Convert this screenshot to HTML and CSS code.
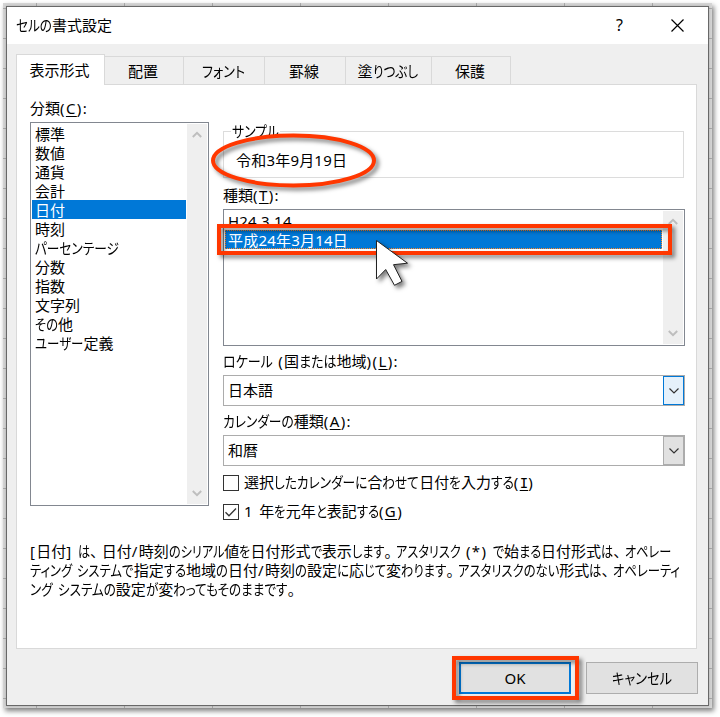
FILE: index.html
```
<!DOCTYPE html>
<html lang="ja">
<head>
<meta charset="utf-8">
<title>セルの書式設定</title>
<link rel="stylesheet" href="styles.css">
</head>
<body>
<div class="sheet">
<main class="dialog">
  <header class="titlebar">
    <h1><span data-width="96">セルの書式設定</span></h1>
    <span class="help">?</span>
    <svg class="close" width="13" height="13" viewBox="0 0 13 13"><path d="M.5.5l12 12M12.5.5l-12 12"/></svg>
  </header>
  <nav class="tabs">
    <div class="tab active">表示形式</div>
    <div class="tab w1">配置</div>
    <div class="tab w2"><span data-width="43">フォント</span></div>
    <div class="tab w2">罫線</div>
    <div class="tab w3"><span data-width="60">塗りつぶし</span></div>
    <div class="tab w4">保護</div>
  </nav>
  <section class="panel">
    <div class="columns">
      <div class="left">
        <div class="label">分類<span class="key">(<u>C</u>):</span></div>
        <div class="listbox categories">
          <ul>
            <li>標準</li><li>数値</li><li>通貨</li><li>会計</li>
            <li class="selected">日付</li>
            <li>時刻</li><li><span data-width="84">パーセンテージ</span></li><li>分数</li><li>指数</li><li>文字列</li>
            <li><span data-width="38">その他</span></li><li><span data-width="78.5">ユーザー定義</span></li>
          </ul>
          <div class="scroll">
            <svg width="10" height="7" viewBox="0 0 10 7"><path d="M.8 6L5 1.8 9.2 6"/></svg>
            <svg width="10" height="7" viewBox="0 0 10 7"><path d="M.8 1L5 5.2 9.2 1"/></svg>
          </div>
        </div>
      </div>
      <div class="right">
        <fieldset class="sample"><legend><span data-width="47">サンプル</span></legend><span class="date">令和3年9月19日</span></fieldset>
        <div class="label type-label">種類<span class="key">(<u>T</u>):</span></div>
        <div class="listbox types">
          <ul><li class="date">H24.3.14</li><li class="selected focus date">平成24年3月14日</li></ul>
          <div class="scroll">
            <svg width="10" height="7" viewBox="0 0 10 7"><path d="M.8 6L5 1.8 9.2 6"/></svg>
            <svg width="10" height="7" viewBox="0 0 10 7"><path d="M.8 1L5 5.2 9.2 1"/></svg>
          </div>
        </div>
        <div class="label field-label"><span data-width="176">ロケール<span class="key"> (</span>国または地域<span class="key">)(<u>L</u>):</span></span></div>
        <div class="combo hot"><span>日本語</span><i><svg width="10" height="6" viewBox="0 0 10 6"><path d="M.5.5L5 5 9.5.5"/></svg></i></div>
        <div class="label field-label"><span data-width="129">カレンダーの種類<span class="key">(<u>A</u>):</span></span></div>
        <div class="combo"><span>和暦</span><i><svg width="10" height="6" viewBox="0 0 10 6"><path d="M.5.5L5 5 9.5.5"/></svg></i></div>
        <div class="check first"><b></b><span data-width="290">選択したカレンダーに合わせて日付を入力する<span class="key">(<u class="serif-i">I</u>)</span></span></div>
        <div class="check"><b><svg width="14" height="14" viewBox="0 0 14 14"><path d="M1.5 7.2L5 10.7 12 3.5"/></svg></b><span data-width="159"><span class="key">1 </span>年を元年と表記する<span class="key">(<u>G</u>)</span></span></div>
      </div>
    </div>
    <p class="description">
      <span data-width="641"><span class="key">[</span>日付<span class="key">] </span>は、日付<span class="key">/</span>時刻のシリアル値を日付形式で表示します。アスタリスク<span class="key"> (*) </span>で始まる日付形式は、オペレー</span><br>
      <span data-width="650">ティング<span class="key"> </span>システムで指定する地域の日付<span class="key">/</span>時刻の設定に応じて変わります。アスタリスクのない形式は、オペレーティ</span><br>
      <span data-width="269">ング<span class="key"> </span>システムの設定が変わってもそのままです。</span>
    </p>
  </section>
  <footer class="buttons">
    <button class="ok">OK</button><button><span data-width="60">キャンセル</span></button>
  </footer>
</main>
</div>
<svg class="marks" width="720" height="717" viewBox="0 0 720 717">
  <g class="red">
    <ellipse cx="293.5" cy="160.5" rx="80.5" ry="25"/>
    <rect x="219" y="226" width="451" height="27"/>
    <rect x="454" y="658" width="123" height="40"/>
  </g>
  <path class="cursor" d="M376.5 240.5V279l9.2-9.5 8.8 15.8 7.5-3.9-8.5-16.7 14-1.5z"/>
</svg>
<script src="kana.js"></script>
</body>
</html>
```
FILE: kana.js
```
// UI fonts set kana narrower than kanji: condense the kana runs of each label to its set width.
document.querySelectorAll('[data-width]').forEach(function (label) {
  var walker = document.createTreeWalker(label, NodeFilter.SHOW_TEXT), nodes = [], node;
  while ((node = walker.nextNode())) nodes.push(node);
  nodes.forEach(function (text) {
    var part = document.createDocumentFragment();
    text.data.split(/([ぁ-ゟァ-ヿ]+|[、。])/).forEach(function (run) {
      if (!run) return;
      if (/^[ぁ-ヿ、。]/.test(run)) {
        var span = document.createElement('span');
        span.className = /[、。]/.test(run) ? 'stop' : 'kana';
        span.textContent = run;
        part.appendChild(span);
      } else part.appendChild(document.createTextNode(run));
    });
    text.replaceWith(part);
  });
  var kana = Array.from(label.querySelectorAll('.kana'));
  var widths = kana.map(function (k) { return k.getBoundingClientRect().width; });
  var total = widths.reduce(function (a, b) { return a + b; }, 0);
  var scale = 1 - (label.getBoundingClientRect().width - Number(label.dataset.width)) / total;
  kana.forEach(function (k, i) {
    k.style.transform = 'scaleX(' + scale + ')';
    k.style.marginRight = widths[i] * (scale - 1) + 'px';
  });
});
```
FILE: styles.css
```
* { box-sizing: border-box; }
body {
  margin: 0; width: 720px; height: 717px; overflow: hidden; position: relative;
  padding: 3px; background: #fff; color: #000;
  font: 15px/19px "Noto Sans", "Noto Sans CJK JP", sans-serif;
  font-feature-settings: "palt"; white-space: nowrap;
}
[data-width] { display: inline-block; }
.kana { display: inline-block; transform-origin: 0 50%; }
.stop { letter-spacing: 4px; }
.key { letter-spacing: 1.4px; white-space: pre; }
.serif-i { font-family: "DejaVu Sans Mono", monospace; font-size: 14px; letter-spacing: 0; }
.sheet {
  width: 709px; height: 705px; padding: 3px;
  background:
    repeating-linear-gradient(90deg, transparent 0 33px, #aaa 33px 34px, transparent 34px 88px),
    repeating-linear-gradient(180deg, transparent 0 5px, #aaa 5px 6px, transparent 6px 30px), #d5d5d5;
  box-shadow: 2px 3px 5px rgba(0,0,0,.5);
}
.dialog {
  width: 703px; height: 700px; border: 1px solid #686868; background: #efefef;
  display: flex; flex-direction: column; box-shadow: 0 0 3px rgba(0,0,0,.2);
}
.titlebar { height: 37px; flex: none; background: #fff; display: flex; align-items: center; padding-left: 9px; }
h1 { margin: 0; font-size: 15px; font-weight: 400; flex: 1; }
.help { font-size: 16px; width: 8px; margin-right: 47px; }
.close { margin-right: 24px; fill: none; stroke: #000; stroke-width: 1.2; }
.tabs { display: flex; align-items: flex-end; height: 41px; flex: none; padding-left: 9px; margin-bottom: -1px; z-index: 1; }
.tab { height: 29px; border: 1px solid #d9d9d9; border-left: 0; text-align: center; line-height: 28px; padding-right: 2px; }
.tab.active { width: 89px; height: 31px; background: #fff; border-left: 1px solid #d9d9d9; border-bottom: 0; line-height: 31px; }
.w1 { width: 79px; } .w2 { width: 81px; } .w3 { width: 86px; } .w4 { width: 79px; }
.panel { margin-left: 9px; width: 681px; height: 565px; flex: none; background: #fff; border: 1px solid #d9d9d9; padding: 14px 11px 0 13px; }
.columns { display: flex; height: 443px; }
.left { width: 179px; margin-right: 14px; }
.right { width: 462px; }
.label { height: 19px; }
.left .label { margin-bottom: 4px; }
u { text-underline-offset: 2px; text-decoration-thickness: 1px; }
.listbox { display: flex; border: 1px solid #828790; padding: 1px; }
.categories { width: 179px; height: 384px; }
.types { width: 462px; height: 137px; }
ul { margin: 0; padding: 0; list-style: none; flex: 1; margin-right: 1px; }
li { height: 19px; line-height: 21px; padding-left: 3px; }
.selected { background: #0078d7; color: #fff; }
.focus { outline: 1px dotted #ff8728; outline-offset: -1px; }
.scroll { width: 20px; background: #efefef; display: flex; flex-direction: column; justify-content: space-between; align-items: center; padding: 7px 1px 7px 0; }
.scroll svg { fill: none; stroke: #bebebe; stroke-width: 2; }
.sample { margin: 23px 0 0; border: 1px solid #dcdcdc; width: 461px; height: 56px; padding: 10px 0 0 12px; }
legend { padding: 0 1px; margin-left: -5px; height: 19px; }
.date { letter-spacing: .2px; }
.type-label { margin: 8px 0 4px; }
.field-label { margin: 6px 0 4px; }
.combo { width: 462px; height: 31px; border: 1px solid #acacac; display: flex; align-items: center; justify-content: space-between; padding-left: 4px; }
.combo span { line-height: 21px; }
.combo i { width: 21px; height: 29px; border: 1px solid #acacac; background: #e1e1e1; display: flex; align-items: center; justify-content: center; }
.hot i { border-color: #0078d7; background: #e5f1fb; }
.combo svg { fill: none; stroke: #333; stroke-width: 1.2; }
.check { display: flex; align-items: center; height: 19px; margin-top: 10px; }
.check.first { margin-top: 7px; }
.check b { width: 16px; height: 16px; border: 1px solid #333; margin-right: 5px; }
.check svg { display: block; fill: none; stroke: #333; stroke-width: 1.3; }
.description { margin: 0; }
.buttons { display: flex; justify-content: flex-end; gap: 15px; padding: 13px 10px 0 0; }
button { width: 112px; height: 32px; border: 1px solid #adadad; background: #e1e1e1; font: inherit; color: #000; padding: 0; font-feature-settings: inherit; }
.ok { border: 2px solid #0078d7; }
.marks { position: absolute; left: 0; top: 0; }
.red { fill: none; stroke: #ff3700; stroke-width: 4; filter: drop-shadow(3px 3px 2px rgba(0,0,0,.5)); }
.cursor { fill: #fff; stroke: #222; stroke-width: 1; filter: drop-shadow(3px 3px 2px rgba(0,0,0,.5)); }
```
